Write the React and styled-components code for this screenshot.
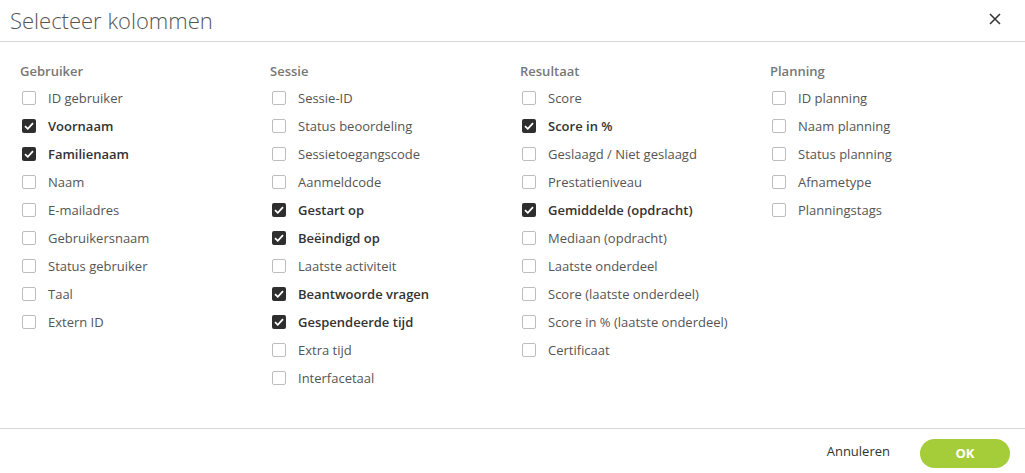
import React from 'react';
import styled, { createGlobalStyle } from 'styled-components';

const GlobalStyle = createGlobalStyle`
  html, body {
    margin: 0;
    padding: 0;
    background: #ffffff;
    font-family: "Open Sans", "Noto Sans", sans-serif;
  }
`;

const Dialog = styled.div`
  width: 1025px;
  height: 473px;
  display: flex;
  flex-direction: column;
  background: #fff;
`;

const Header = styled.div`
  height: 42px;
  box-sizing: border-box;
  border-bottom: 1px solid #d6d6d6;
  display: flex;
  align-items: center;
  justify-content: space-between;
  padding: 0 22px 2px 10px;
`;

const Title = styled.h1`
  margin: 0;
  font-size: 22px;
  font-weight: 300;
  color: #555;
  letter-spacing: 0;
`;

const Close = styled.button`
  border: none;
  background: none;
  padding: 0;
  width: 14px;
  height: 14px;
  display: flex;
  cursor: pointer;
`;

const Body = styled.div`
  flex: 1;
  display: grid;
  grid-template-columns: repeat(4, 250px);
  padding: 18px 20px 0;
  align-content: start;
`;

const Column = styled.div`
  display: flex;
  flex-direction: column;
`;

const ColumnTitle = styled.div`
  font-size: 13px;
  font-weight: 600;
  color: #777;
  height: 22px;
  line-height: 22px;
  margin-bottom: 2px;
`;

const Row = styled.label`
  display: flex;
  align-items: center;
  height: 28px;
  font-size: 13px;
  color: ${p => (p.$checked ? '#333' : '#555')};
  font-weight: ${p => (p.$checked ? 600 : 400)};
  cursor: pointer;
`;

const Box = styled.span`
  width: 14px;
  height: 14px;
  box-sizing: border-box;
  margin-left: 2px;
  margin-right: 12px;
  border-radius: 2px;
  border: ${p => (p.$checked ? 'none' : '1.5px solid #bdbdbd')};
  background: ${p => (p.$checked ? '#2e2e2e' : '#fff')};
  display: flex;
  align-items: center;
  justify-content: center;
  flex-shrink: 0;
`;

const Footer = styled.div`
  height: 44px;
  border-top: 1px solid #d6d6d6;
  display: flex;
  align-items: center;
  justify-content: flex-end;
  padding: 0 15px 0 0;
  gap: 30px;
`;

const Cancel = styled.button`
  border: none;
  background: none;
  font-family: inherit;
  font-size: 13px;
  color: #333;
  cursor: pointer;
  padding: 0;
`;

const Ok = styled.button`
  width: 90px;
  height: 29px;
  border: none;
  border-radius: 15px;
  background: #a5cd39;
  color: #fff;
  font-family: inherit;
  font-size: 13px;
  font-weight: 700;
  cursor: pointer;
  margin-top: 4px;
`;

const columns = [
  {
    title: 'Gebruiker',
    items: [
      ['ID gebruiker', false],
      ['Voornaam', true],
      ['Familienaam', true],
      ['Naam', false],
      ['E-mailadres', false],
      ['Gebruikersnaam', false],
      ['Status gebruiker', false],
      ['Taal', false],
      ['Extern ID', false],
    ],
  },
  {
    title: 'Sessie',
    items: [
      ['Sessie-ID', false],
      ['Status beoordeling', false],
      ['Sessietoegangscode', false],
      ['Aanmeldcode', false],
      ['Gestart op', true],
      ['Beëindigd op', true],
      ['Laatste activiteit', false],
      ['Beantwoorde vragen', true],
      ['Gespendeerde tijd', true],
      ['Extra tijd', false],
      ['Interfacetaal', false],
    ],
  },
  {
    title: 'Resultaat',
    items: [
      ['Score', false],
      ['Score in %', true],
      ['Geslaagd / Niet geslaagd', false],
      ['Prestatieniveau', false],
      ['Gemiddelde (opdracht)', true],
      ['Mediaan (opdracht)', false],
      ['Laatste onderdeel', false],
      ['Score (laatste onderdeel)', false],
      ['Score in % (laatste onderdeel)', false],
      ['Certificaat', false],
    ],
  },
  {
    title: 'Planning',
    items: [
      ['ID planning', false],
      ['Naam planning', false],
      ['Status planning', false],
      ['Afnametype', false],
      ['Planningstags', false],
    ],
  },
];

function Check() {
  return (
    <svg width="10" height="8" viewBox="0 0 10 8">
      <path d="M1 4.2 L3.8 6.8 L9 1.2" stroke="#fff" strokeWidth="1.8" fill="none" />
    </svg>
  );
}

export default function App() {
  return (
    <Dialog>
      <GlobalStyle />
      <Header>
        <Title>Selecteer kolommen</Title>
        <Close aria-label="Sluiten">
          <svg width="12" height="12" viewBox="0 0 12 12">
            <path d="M1 1 L11 11 M11 1 L1 11" stroke="#333" strokeWidth="1.5" />
          </svg>
        </Close>
      </Header>
      <Body>
        {columns.map(col => (
          <Column key={col.title}>
            <ColumnTitle>{col.title}</ColumnTitle>
            {col.items.map(([label, checked]) => (
              <Row key={label} $checked={checked}>
                <Box $checked={checked}>{checked && <Check />}</Box>
                {label}
              </Row>
            ))}
          </Column>
        ))}
      </Body>
      <Footer>
        <Cancel>Annuleren</Cancel>
        <Ok>OK</Ok>
      </Footer>
    </Dialog>
  );
}
